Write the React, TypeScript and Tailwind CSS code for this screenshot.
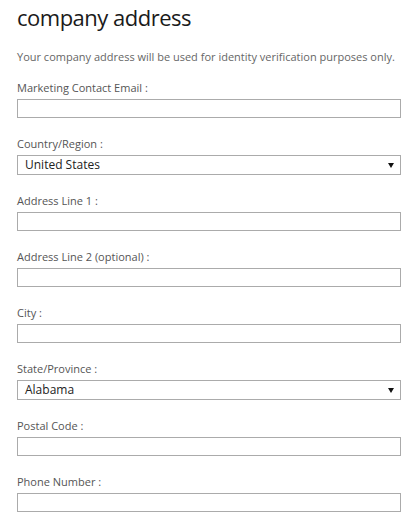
import React from "react";

const font = { fontFamily: '"Open Sans", "Noto Sans", sans-serif' };

function Label({ children }: { children: React.ReactNode }) {
  return <div className="h-4 text-[11px] leading-4 text-[#555]">{children}</div>;
}

function TextField({ label }: { label: string }) {
  return (
    <div className="mb-[18px]">
      <Label>{label}</Label>
      <div className="mt-[3px] h-[19px] w-[384px] border border-[#ababab] bg-white" />
    </div>
  );
}

function SelectField({ label, value }: { label: string; value: string }) {
  return (
    <div className="mb-[18px]">
      <Label>{label}</Label>
      <div className="mt-[3px] flex h-[20px] w-[384px] items-center justify-between border border-[#ababab] bg-white pl-[7px] pr-[6px]">
        <span className="text-[12px] leading-4 text-[#222]">{value}</span>
        <svg width="6" height="5" viewBox="0 0 6 5">
          <polygon points="0,0 6,0 3,5" fill="#111" />
        </svg>
      </div>
    </div>
  );
}

export default function App() {
  return (
    <div className="min-h-[521px] w-[418px] bg-white pl-[17px]" style={font}>
      <h1 className="pt-[2px] text-[22px] leading-[30px] font-normal tracking-[-0.5px] text-[#1a1a1a]">company address</h1>
      <p className="mt-[17px] text-[11px] leading-4 text-[#666]">
        Your company address will be used for identity verification purposes only.
      </p>
      <div className="mt-[15px]">
        <TextField label="Marketing Contact Email :" />
        <SelectField label="Country/Region :" value="United States" />
        <TextField label="Address Line 1 :" />
        <TextField label="Address Line 2 (optional) :" />
        <TextField label="City :" />
        <SelectField label="State/Province :" value="Alabama" />
        <TextField label="Postal Code :" />
        <TextField label="Phone Number :" />
      </div>
    </div>
  );
}
